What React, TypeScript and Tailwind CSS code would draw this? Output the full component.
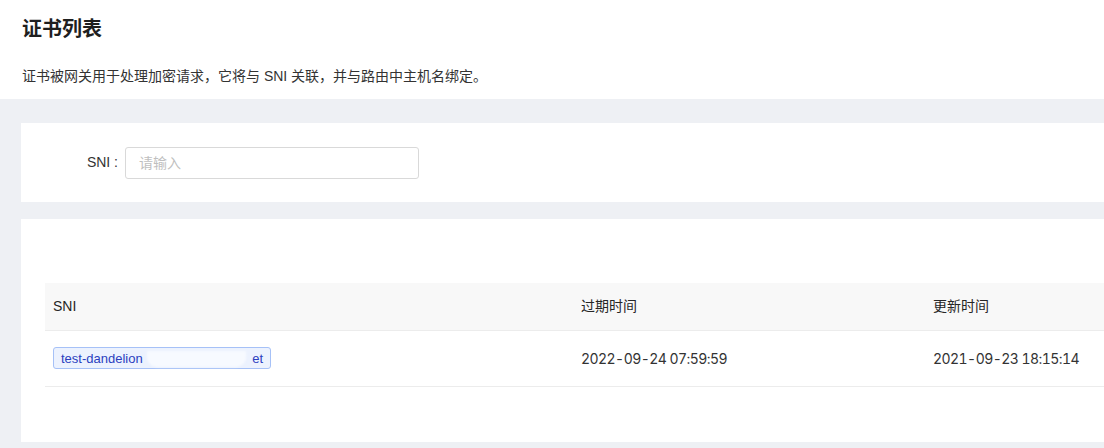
const font = { fontFamily: '"Liberation Sans", "Noto Sans CJK SC", sans-serif' };
const numFont = { fontFamily: 'Inter, "Liberation Sans", sans-serif' };

const rows = [
  { sni: "test-dandelion", expire: "2022-09-24 07:59:59", updated: "2021-09-23 18:15:14" },
];

function SniTag({ name }: { name: string }) {
  return (
    <span className="inline-flex h-[22px] w-[218px] items-center rounded-[3px] border border-[#a6c1f7] bg-[#ecf2fe] pl-[7px] text-[13px] leading-none text-[#2b3fbf]">
      <span>{name}</span>
      <span className="relative ml-[2px] h-full flex-1">
        <span className="absolute left-[2px] right-[6px] top-[3px] bottom-[1px] rounded-b-[10px] bg-[#f7faff] blur-[1px]" />
      </span>
      <span className="pr-[7px]">et</span>
    </span>
  );
}

export default function App() {
  return (
    <div className="flex h-[448px] w-[1104px] flex-col overflow-hidden bg-[#eef0f4] text-[#262626]" style={font}>
      <div className="h-[99px] shrink-0 bg-white px-[22px] pt-[17px]">
        <h1 className="text-[20px] font-bold leading-[24px] text-[#1f1f1f]">证书列表</h1>
        <p className="mt-[24px] text-[14px] leading-[22px] text-[#333]">
          证书被网关用于处理加密请求，它将与 SNI 关联，并与路由中主机名绑定。
        </p>
      </div>

      <div className="flex flex-1 flex-col gap-[17px] pl-[21px] pt-[24px]">
        <div className="flex h-[79px] shrink-0 items-center bg-white">
          <label className="w-[104px] pr-[7px] text-right text-[14px] text-[#333]">SNI :</label>
          <input
            placeholder="请输入"
            className="h-[32px] w-[294px] rounded-[3px] border border-[#d9d9d9] px-[13px] text-[14px] outline-none placeholder:text-[#bfbfbf]"
            style={font}
          />
        </div>

        <div className="mb-[6px] flex-1 bg-white pl-[24px] pt-[64px]">
          <table className="w-full border-collapse text-left text-[14px]">
            <thead>
              <tr className="h-[47px] border-b border-[#ececec] bg-[#f8f8f8]">
                <th className="w-[528px] pl-[8px] font-normal text-[#262626]">SNI</th>
                <th className="w-[352px] pl-[8px] font-normal text-[#262626]">过期时间</th>
                <th className="pl-[8px] font-normal text-[#262626]">更新时间</th>
              </tr>
            </thead>
            <tbody>
              {rows.map((r) => (
                <tr key={r.sni} className="h-[56px] border-b border-[#ececec]">
                  <td className="pl-[8px]">
                    <SniTag name={r.sni} />
                  </td>
                  <td className="pl-[8px] tabular-nums tracking-[-0.55px] text-[#333]" style={numFont}>{r.expire}</td>
                  <td className="pl-[8px] tabular-nums tracking-[-0.55px] text-[#333]" style={numFont}>{r.updated}</td>
                </tr>
              ))}
            </tbody>
          </table>
        </div>
      </div>
    </div>
  );
}
